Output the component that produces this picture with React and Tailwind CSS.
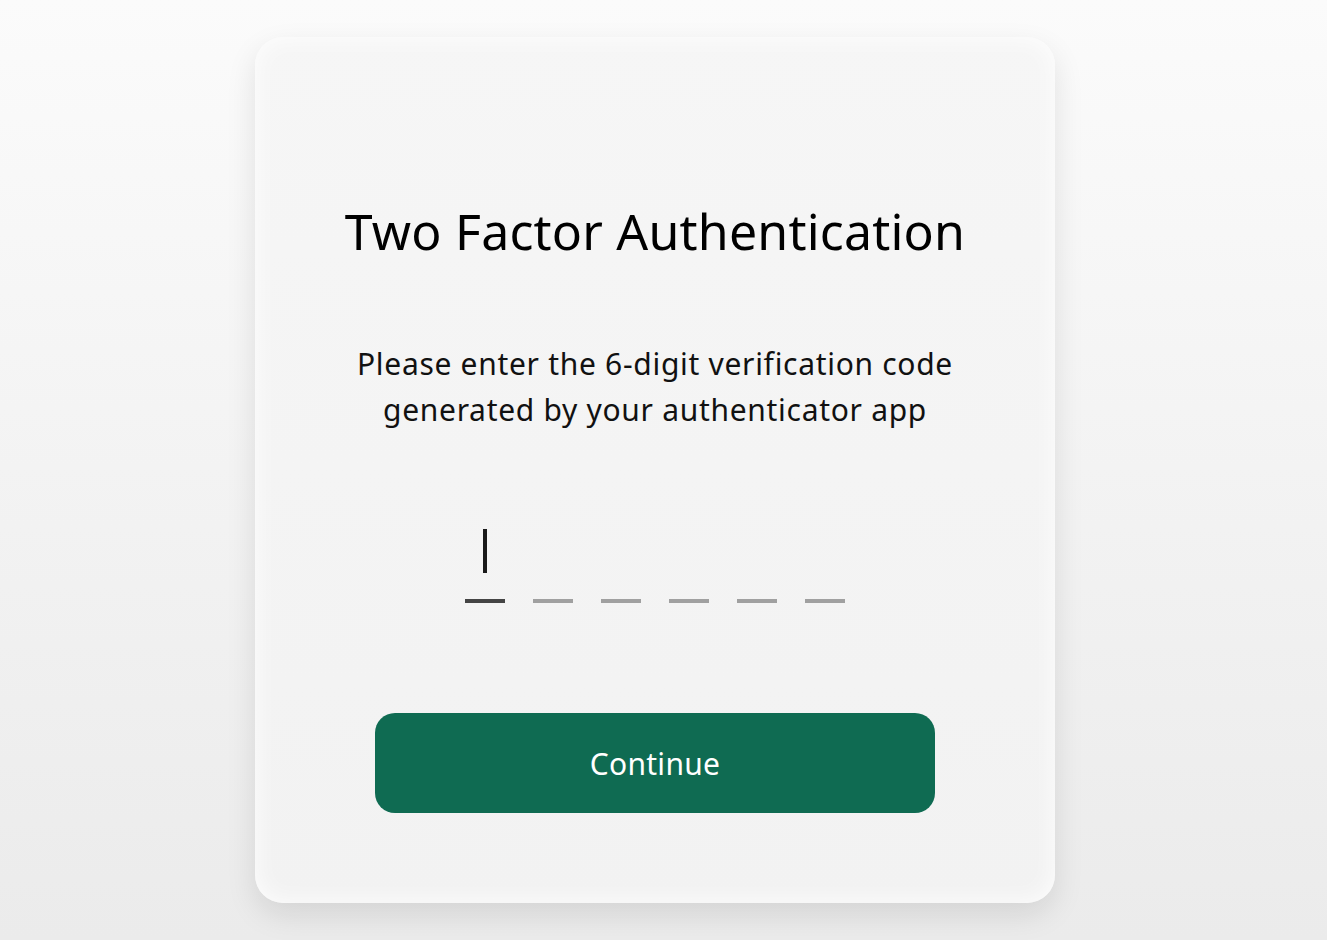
export default function App() {
  return (
    <div
      className="w-full h-[940px] bg-gradient-to-b from-[#fbfbfb] to-[#ebebeb]"
      style={{ fontFamily: '"Noto Sans", "Open Sans", sans-serif' }}
    >
      <div className="w-[1310px] h-full flex justify-center">
        <div className="mt-[37px] w-[800px] h-[866px] shrink-0 rounded-[28px] bg-gradient-to-b from-[#f6f6f6] to-[#f2f2f2] shadow-[0_12px_30px_rgba(0,0,0,0.10),inset_0_0_24px_rgba(255,255,255,0.9)] flex flex-col items-center">
          <h1 className="mt-[164px] text-[50px] leading-[60px] text-black font-normal tracking-[0.2px]">
            Two Factor Authentication
          </h1>
          <p className="mt-[80px] text-[30px] leading-[46px] text-[#111] text-center font-normal tracking-[0.7px]">
            Please enter the 6-digit verification code
            <br />
            generated by your authenticator app
          </p>
          <div className="mt-[96px] flex gap-[28px]">
            {[0, 1, 2, 3, 4, 5].map((i) => (
              <div key={i} className="w-[40px] h-[74px] flex flex-col items-center justify-between">
                {i === 0 ? (
                  <div className="w-[4px] h-[44px] bg-[#1a1a1a]" />
                ) : (
                  <div className="h-[44px]" />
                )}
                <div className={i === 0 ? "w-[40px] h-[4px] bg-[#444444]" : "w-[40px] h-[4px] bg-[#a0a0a0]"} />
              </div>
            ))}
          </div>
          <button className="mt-[110px] w-[560px] h-[100px] rounded-[20px] bg-[#0f6b52] text-white text-[30px] font-normal tracking-[0.3px]">
            Continue
          </button>
        </div>
      </div>
    </div>
  );
}
